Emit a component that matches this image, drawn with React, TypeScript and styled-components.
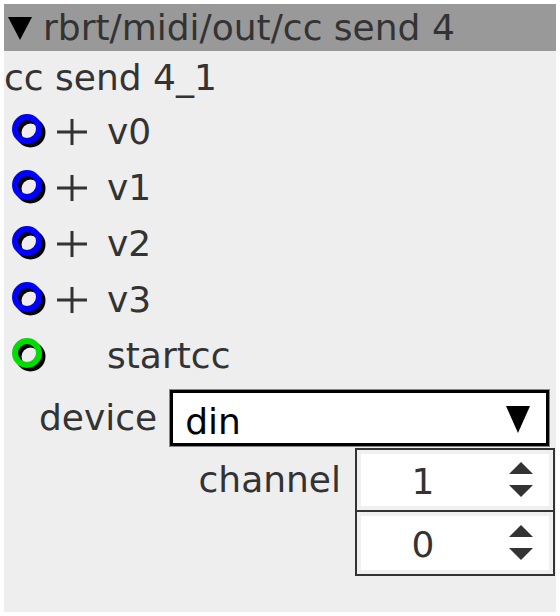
import styled, { createGlobalStyle } from "styled-components";

const GlobalStyle = createGlobalStyle`
  body {
    margin: 0;
    background: #fff;
    font-family: "DejaVu Sans", Verdana, sans-serif;
  }
`;

type Port = { name: string; color: string; plus: boolean };

const ports: Port[] = [
  { name: "v0", color: "#0000ff", plus: true },
  { name: "v1", color: "#0000ff", plus: true },
  { name: "v2", color: "#0000ff", plus: true },
  { name: "v3", color: "#0000ff", plus: true },
  { name: "startcc", color: "#00dd00", plus: false },
];

function Ring({ color }: { color: string }) {
  return (
    <svg width="36" height="36" viewBox="0 0 36 36">
      <circle cx="18.5" cy="18.5" r="12" fill="none" stroke="#000" strokeWidth="6" />
      <circle cx="15" cy="15" r="12" fill="none" stroke={color} strokeWidth="6" />
    </svg>
  );
}

function Plus() {
  return (
    <svg width="30" height="26" viewBox="0 0 30 26">
      <rect x="0" y="11.5" width="30" height="3" fill="#333" />
      <rect x="13.5" y="0" width="3" height="26" fill="#333" />
    </svg>
  );
}

function Spinner() {
  return (
    <svg width="26" height="36" viewBox="0 0 26 36">
      <polygon points="13,0 25,12 1,12" fill="#333" />
      <polygon points="1,23 25,23 13,35" fill="#333" />
    </svg>
  );
}

export default function App() {
  return (
    <>
      <GlobalStyle />
      <Panel>
        <TitleBar>
          <svg width="24" height="24" viewBox="0 0 24 24">
            <polygon points="0,0 24,0 12,23" fill="#000" />
          </svg>
          <span>rbrt/midi/out/cc send 4</span>
        </TitleBar>
        <NodeName>cc send 4_1</NodeName>

        {ports.map((p) => (
          <PortRow key={p.name}>
            <Ring color={p.color} />
            <PlusSlot>{p.plus && <Plus />}</PlusSlot>
            <PortLabel>{p.name}</PortLabel>
          </PortRow>
        ))}

        <DeviceRow>
          <FieldLabel>device</FieldLabel>
          <Select>
            <span>din</span>
            <svg width="24" height="27" viewBox="0 0 24 27">
              <polygon points="0,0 24,0 12,27" fill="#000" />
            </svg>
          </Select>
        </DeviceRow>

        <NumberGrid>
          <FieldLabel $right>channel</FieldLabel>
          <NumberBox>
            <NumberValue>1</NumberValue>
            <SpinSlot>
              <Spinner />
            </SpinSlot>
          </NumberBox>
          <div />
          <NumberBox $stacked>
            <NumberValue>0</NumberValue>
            <SpinSlot>
              <Spinner />
            </SpinSlot>
          </NumberBox>
        </NumberGrid>
      </Panel>
    </>
  );
}

const Panel = styled.div`
  margin: 4px;
  width: 552px;
  height: 608px;
  background: #eeeeee;
  color: #333;
  font-size: 36px;
  display: flex;
  flex-direction: column;
`;

const TitleBar = styled.div`
  height: 47px;
  background: #999999;
  display: flex;
  align-items: center;
  gap: 11px;
  padding-left: 4px;
  line-height: 1;

  svg {
    margin-top: 2px;
  }
`;

const NodeName = styled.div`
  height: 53px;
  display: flex;
  align-items: center;
  line-height: 1;
`;

const PortRow = styled.div`
  height: 56px;
  display: flex;
  align-items: center;
  padding-left: 8px;

  svg {
    display: block;
  }
`;

const PlusSlot = styled.div`
  width: 30px;
  margin-left: 9px;
  margin-right: 20px;
  display: flex;
  align-items: center;
`;

const PortLabel = styled.span`
  line-height: 1;
`;

const DeviceRow = styled.div`
  display: flex;
  align-items: center;
  padding-left: 35px;
  margin-top: 6px;
  gap: 13px;
`;

const FieldLabel = styled.span<{ $right?: boolean }>`
  line-height: 1;
  justify-self: ${(p) => (p.$right ? "end" : "start")};
  align-self: center;
  margin-right: ${(p) => (p.$right ? "14px" : "0")};
`;

const Select = styled.div`
  box-sizing: border-box;
  width: 379px;
  height: 56px;
  border: 3px solid #000;
  box-shadow: 0 0 0 1px #888;
  background: #fff;
  color: #000;
  display: flex;
  align-items: flex-end;
  justify-content: space-between;
  padding: 0 16px 0 12px;
  line-height: 1.2;

  svg {
    align-self: center;
    margin-top: 2px;
  }
`;

const NumberGrid = styled.div`
  display: grid;
  grid-template-columns: 1fr 200px;
  margin-top: 2px;
  margin-right: 1px;
`;

const NumberBox = styled.div<{ $stacked?: boolean }>`
  height: 64px;
  box-sizing: border-box;
  border: 2px solid #333;
  border-top-width: ${(p) => (p.$stacked ? "0" : "2px")};
  background: #fff;
  box-shadow: inset 0 0 0 4px #f0f0f0;
  display: flex;
  align-items: center;
`;

const NumberValue = styled.span`
  width: 132px;
  text-align: center;
  line-height: 1;
  margin-top: 4px;
`;

const SpinSlot = styled.div`
  flex: 1;
  display: flex;
  justify-content: center;

  svg {
    display: block;
  }
`;
